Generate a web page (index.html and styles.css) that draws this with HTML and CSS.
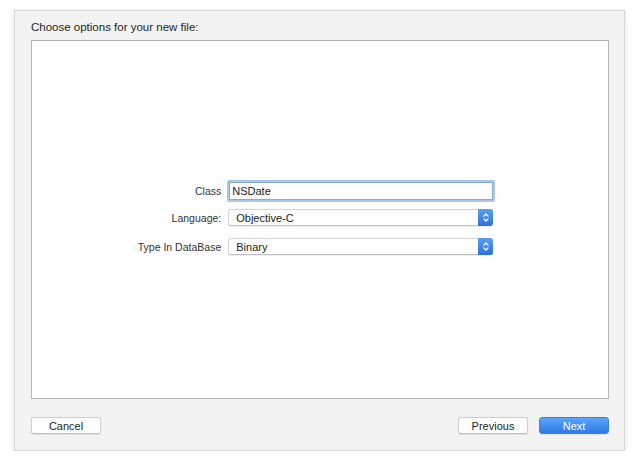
FILE: index.html
```html
<!DOCTYPE html>
<html>
<head>
<meta charset="utf-8">
<link rel="stylesheet" href="styles.css">
</head>
<body>
<div class="window">
  <div class="title">Choose options for your new file:</div>
  <div class="panel">
    <div class="form">
      <label class="label">Class</label>
      <div class="field-ring"><div class="field">NSDate</div></div>
      <label class="label row-lang">Language:</label>
      <div class="popup row-lang"><span class="popup-text">Objective-C</span><span class="stepper"><svg width="8" height="11" viewBox="0 0 8 11"><path d="M2 4 L4 2 L6 4 M2 7 L4 9 L6 7" fill="none" stroke="#fff" stroke-width="1.2" stroke-linecap="round" stroke-linejoin="round"/></svg></span></div>
      <label class="label row-type">Type In DataBase</label>
      <div class="popup row-type"><span class="popup-text">Binary</span><span class="stepper"><svg width="8" height="11" viewBox="0 0 8 11"><path d="M2 4 L4 2 L6 4 M2 7 L4 9 L6 7" fill="none" stroke="#fff" stroke-width="1.2" stroke-linecap="round" stroke-linejoin="round"/></svg></span></div>
    </div>
  </div>
  <div class="buttons">
    <button class="btn">Cancel</button>
    <div class="spacer"></div>
    <button class="btn">Previous</button>
    <button class="btn btn-primary">Next</button>
  </div>
</div>
</body>
</html>
```
FILE: styles.css
```css
html, body {
  margin: 0;
  padding: 0;
  background: #ffffff;
}
body {
  font-family: "Liberation Sans", Arial, sans-serif;
  font-size: 11px;
  color: #222;
  padding: 10px 0 0 14px;
}
.window {
  width: 578px;
  height: 439px;
  background: #f3f3f3;
  border: 1px solid #d6d6d6;
  box-shadow: 0 2px 6px rgba(0,0,0,0.12);
  display: flex;
  flex-direction: column;
  padding: 0 15px 0 16px;
}
.title {
  height: 29px;
  line-height: 16px;
  padding-top: 8px;
  box-sizing: border-box;
  font-size: 11.5px;
  color: #1e1e1e;
}
.panel {
  height: 359px;
  box-sizing: border-box;
  background: #ffffff;
  border: 1px solid #b3b3b3;
  display: flex;
  align-items: center;
  justify-content: center;
  padding-right: 7px;
  padding-bottom: 4px;
}
.form {
  display: grid;
  grid-template-columns: auto 268px;
  column-gap: 6px;
  align-items: center;
}
.label {
  text-align: right;
  color: #333;
  font-size: 10.5px;
}
.row-lang {
  margin-top: 7px;
}
.row-type {
  margin-top: 12px;
}
.field-ring {
  height: 22px;
  box-sizing: border-box;
  border: 2px solid #a9c8e8;
  border-radius: 2px;
  background: #fff;
}
.field {
  height: 100%;
  box-sizing: border-box;
  border: 1px solid #86abd2;
  padding-left: 2px;
  line-height: 16px;
  color: #1a1a1a;
  font-size: 11px;
}
.popup {
  height: 17px;
  margin-left: 1px;
  margin-right: 2px;
  box-sizing: border-box;
  border: 1px solid #d4d4d4;
  border-bottom-color: #c2c2c2;
  border-radius: 3px;
  background: #fff;
  display: flex;
  align-items: center;
  justify-content: space-between;
  box-shadow: 0 0.5px 1px rgba(0,0,0,0.08);
}
.popup-text {
  padding-left: 7px;
  font-size: 11px;
  color: #1a1a1a;
}
.stepper {
  width: 15px;
  height: 17px;
  margin: -1px -1px -1px 0;
  border-radius: 0 3px 3px 0;
  background: linear-gradient(#5aa0f0, #2c72d8);
  display: flex;
  align-items: center;
  justify-content: center;
}
.buttons {
  display: flex;
  align-items: center;
  margin-top: 18px;
  gap: 11px;
}
.spacer {
  flex: 1;
}
.btn {
  width: 70px;
  height: 17px;
  padding: 0;
  box-sizing: border-box;
  border: 1px solid #cfcfcf;
  border-bottom-color: #bdbdbd;
  border-radius: 3px;
  background: #ffffff;
  font-family: "Liberation Sans", Arial, sans-serif;
  font-size: 11px;
  color: #222;
  box-shadow: 0 0.5px 1px rgba(0,0,0,0.08);
}
.btn-primary {
  background: linear-gradient(#5aa5f8, #2f7ae6);
  border-color: #3a80e0;
  color: #ffffff;
}
```
